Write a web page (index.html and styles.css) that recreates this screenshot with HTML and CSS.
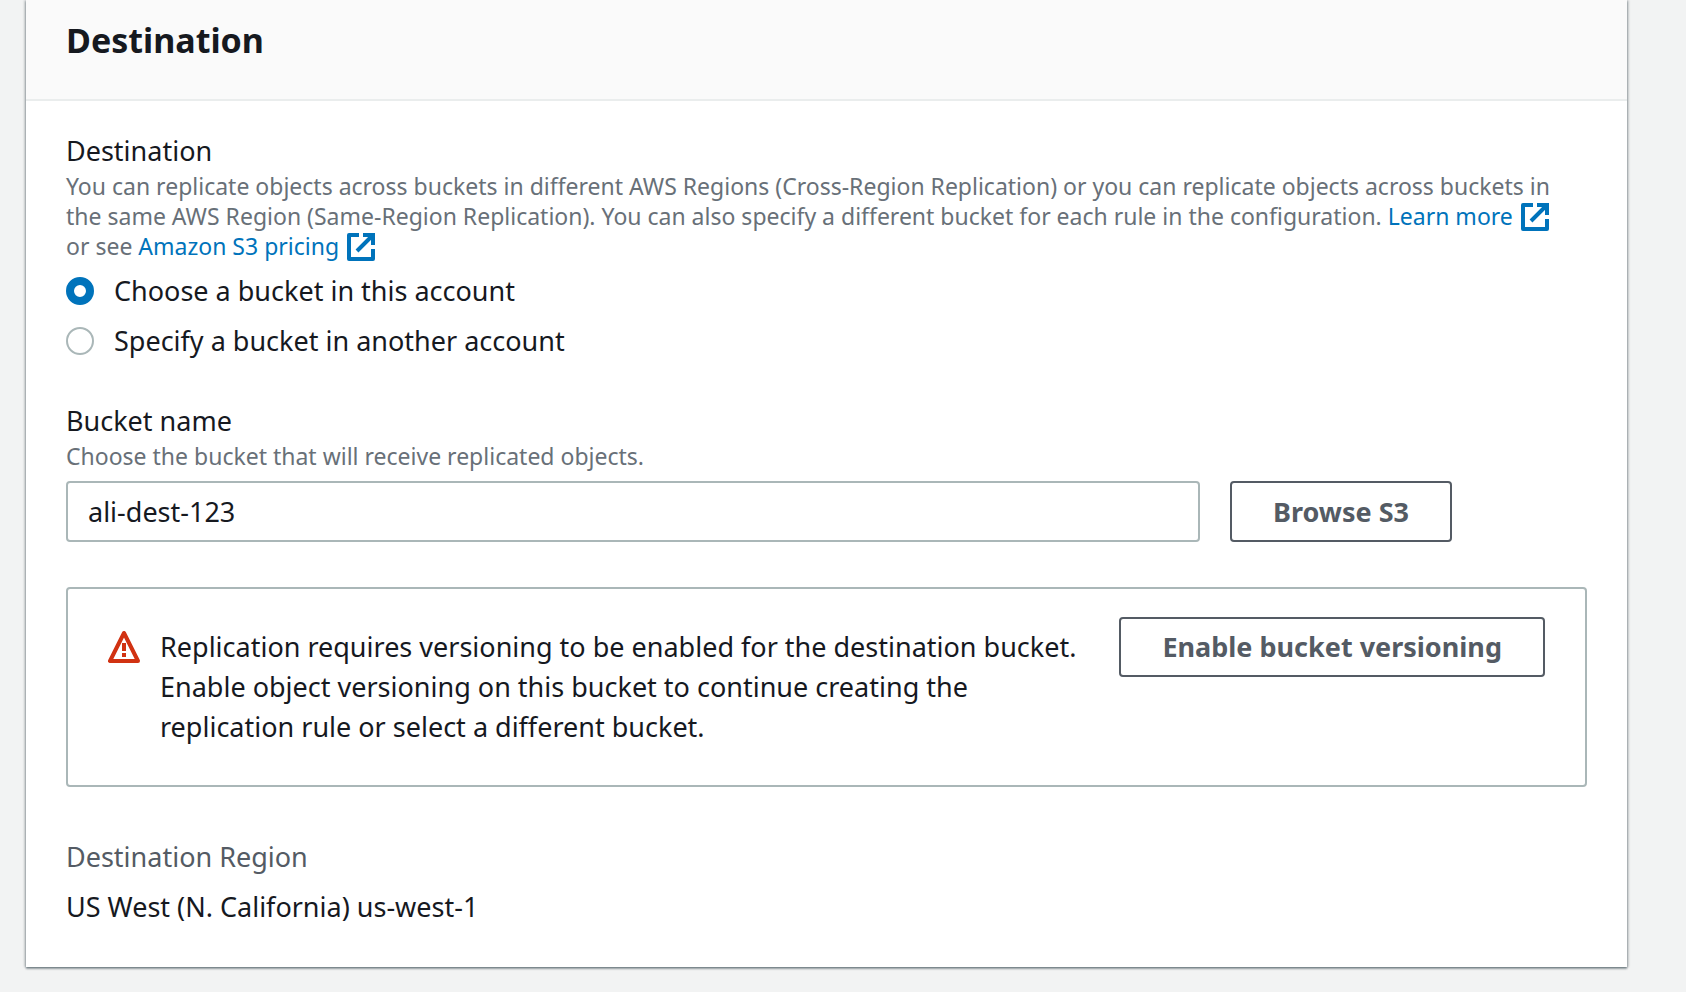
FILE: index.html
```html
<!DOCTYPE html>
<html lang="en">
<head>
<meta charset="utf-8">
<meta name="viewport" content="width=device-width, initial-scale=1">
<title>Destination</title>
<link rel="stylesheet" href="styles.css">
</head>
<body>
<svg class="sprite" aria-hidden="true">
  <symbol id="external" viewBox="0 0 28 28">
    <path d="M12 2H2v24h24V16" fill="none" stroke="currentColor" stroke-width="4" stroke-linejoin="round"/>
    <path d="M16 2h10v10M25 3L10 18" fill="none" stroke="currentColor" stroke-width="4"/>
  </symbol>
</svg>
<main class="panel">
  <header class="panel-header"><h2 class="panel-title">Destination</h2></header>
  <form class="panel-body">
    <fieldset class="choices" aria-describedby="destination-hint">
      <legend class="label">Destination</legend>
      <p class="hint" id="destination-hint">You can replicate objects across buckets in different AWS Regions (Cross-Region Replication) or you can replicate objects across buckets in the same AWS Region (Same-Region Replication). You can also specify a different bucket for each rule in the configuration. <a class="link" href="#learn-more">Learn more&nbsp;<svg class="external" aria-hidden="true"><use href="#external"/></svg></a> or see <a class="link" href="#pricing">Amazon S3 pricing&nbsp;<svg class="external" aria-hidden="true"><use href="#external"/></svg></a></p>
      <div class="options">
        <label class="option"><input class="radio" type="radio" name="account" checked>Choose a bucket in this account</label>
        <label class="option"><input class="radio" type="radio" name="account">Specify a bucket in another account</label>
      </div>
    </fieldset>
    <div class="field">
      <label class="label" for="bucket">Bucket name</label>
      <p class="hint" id="bucket-hint">Choose the bucket that will receive replicated objects.</p>
      <div class="picker">
        <input class="text-input" id="bucket" type="text" value="ali-dest-123" aria-describedby="bucket-hint">
        <button class="button" type="button">Browse S3</button>
      </div>
    </div>
    <div class="alert" role="alert">
      <svg class="warning" viewBox="0 0 32 32" aria-hidden="true">
        <path d="M16 2L2 30h28z" fill="none" stroke="currentColor" stroke-width="4" stroke-linejoin="round"/>
        <path d="M16 12v8M16 22v4" fill="none" stroke="currentColor" stroke-width="4"/>
      </svg>
      <p class="alert-text">Replication requires versioning to be enabled for the destination bucket. Enable object versioning on this bucket to continue creating the replication rule or select a different bucket.</p>
      <button class="button" type="button">Enable bucket versioning</button>
    </div>
    <dl class="region">
      <dt class="region-name">Destination Region</dt>
      <dd class="region-value">US West (N. California) us-west-1</dd>
    </dl>
  </form>
</main>
</body>
</html>
```
FILE: styles.css
```css
* { box-sizing: border-box; }

body {
  margin: 0;
  padding: 0 59px 24px 26px;
  background: #f2f3f3;
  color: #16191f;
  font-family: "Noto Sans", "Open Sans", sans-serif;
  font-size: 27px;
  line-height: 40px;
}

.sprite { display: none; }

.panel {
  background: #fff;
  box-shadow:
    0 2px 2px 0 rgba(0, 28, 36, 0.3),
    2px 0 2px 0 rgba(0, 28, 36, 0.15),
    -2px 0 2px 0 rgba(0, 28, 36, 0.15),
    0 1px 2px 0 rgba(0, 28, 36, 0.3);
}

.panel-header {
  padding: 16px 40px 34px;
  background: #fafafa;
  border-bottom: 2px solid #eaeded;
}

.panel-title {
  margin: 0;
  font-size: 34px;
  line-height: 49px;
  font-weight: 700;
}

.panel-body {
  display: flex;
  flex-direction: column;
  padding: 30px 40px 40px;
}

.choices {
  min-width: 0;
  margin: 0 0 40px;
  padding: 0;
  border: 0;
}

.label {
  display: block;
  padding: 0;
}

.hint {
  margin: 0;
  padding-right: 16px;
  color: #687078;
  font-size: 23px;
  line-height: 30px;
}

.link {
  color: #0073bb;
  text-decoration: none;
}

.external {
  width: 28px;
  height: 28px;
  margin: -4px 0 -4px 2px;
  vertical-align: -2px;
}

.options {
  display: grid;
  gap: 10px;
  margin-top: 10px;
}

.option {
  display: flex;
  align-items: center;
  gap: 20px;
}

.radio {
  appearance: none;
  flex: none;
  width: 28px;
  height: 28px;
  margin: 0;
  border: 2px solid #aab7b8;
  border-radius: 50%;
  background: #fff;
}

.radio:checked { border: 8px solid #0073bb; }

.field { margin-bottom: 45px; }

.picker {
  display: flex;
  gap: 30px;
  margin-top: 10px;
  padding-right: 135px;
}

.text-input {
  flex: 1;
  min-width: 0;
  height: 61px;
  padding: 0 20px;
  border: 2px solid #aab7b8;
  border-radius: 4px;
  background: #fff;
  color: inherit;
  font: inherit;
}

.button {
  flex: none;
  height: 60px;
  padding: 0 41px;
  border: 2px solid #545b64;
  border-radius: 4px;
  background: #fff;
  color: #545b64;
  font: inherit;
  font-weight: 700;
}

.picker .button { height: 61px; }

.alert {
  display: flex;
  align-items: flex-start;
  margin-bottom: 50px;
  padding: 28px 40px;
  border: 2px solid #aab7b8;
  border-radius: 4px;
}

.warning {
  flex: none;
  width: 32px;
  height: 32px;
  margin: 14px 20px 0 0;
  color: #d13212;
}

.alert-text {
  flex: 1;
  margin: 0;
  padding: 10px 32px 10px 0;
}

.region { margin: 0; }

.region-name {
  margin-bottom: 10px;
  color: #545b64;
}

.region-value { margin: 0; }
```
